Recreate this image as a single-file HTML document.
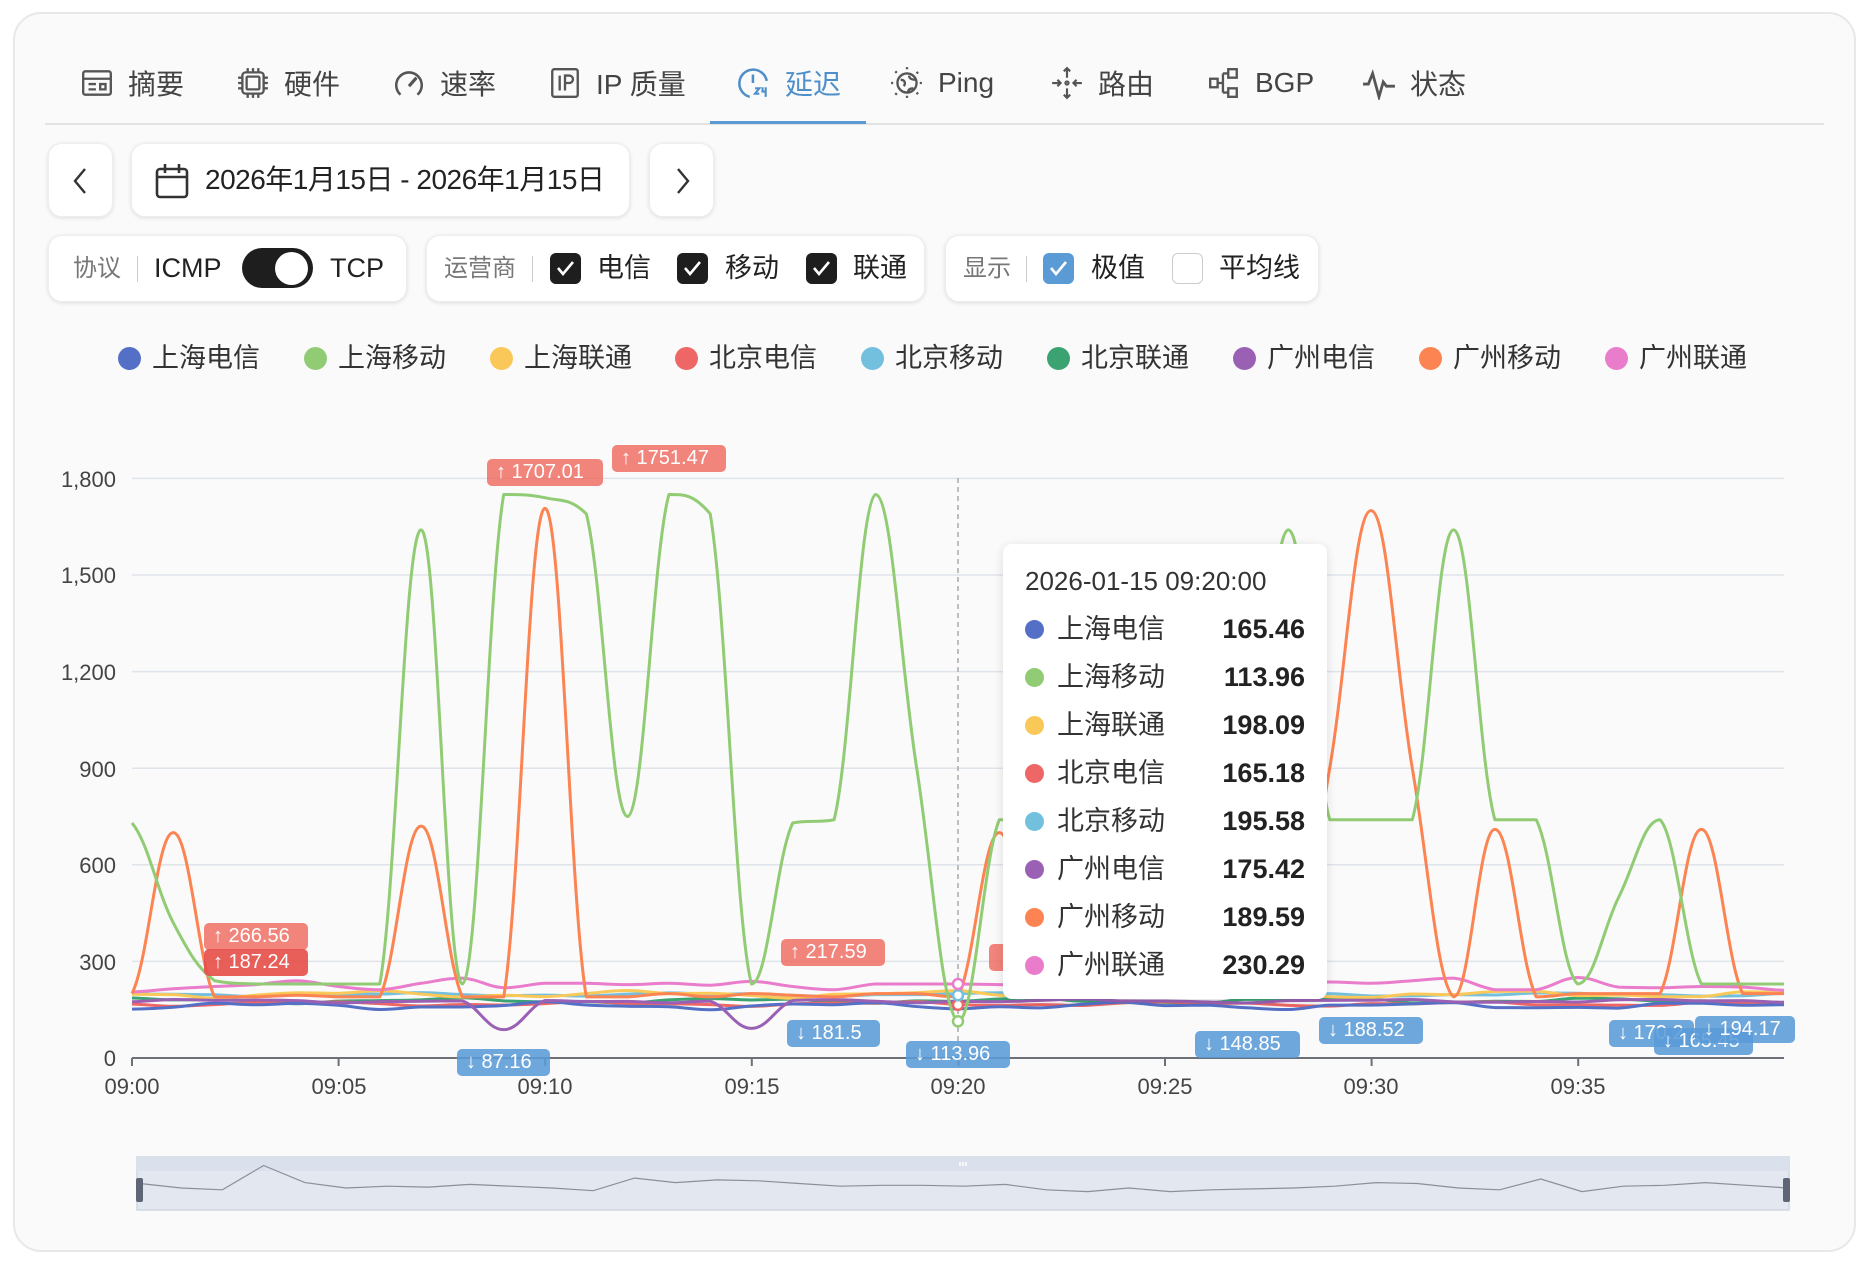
<!DOCTYPE html>
<html><head><meta charset="utf-8">
<style>
*{margin:0;padding:0;box-sizing:border-box}
body{width:1870px;height:1264px;background:#fff;position:relative;overflow:hidden;font-family:"Liberation Sans","Noto Sans CJK SC",sans-serif;color:#222}
.abs{position:absolute}
.card{left:13px;top:12px;width:1843px;height:1240px;background:#fafafa;border:2px solid #e8e8e8;border-radius:28px}
.tab{position:absolute;top:64px;height:38px;display:flex;align-items:center;font-size:28px;color:#444;white-space:nowrap}
.tab svg{width:34px;height:34px;margin-right:14px}
.btn{position:absolute;background:#fff;border-radius:14px;box-shadow:0 1px 4px rgba(0,0,0,.12);border:1px solid #eee}
.box{position:absolute;top:235px;height:67px;background:#fff;border-radius:14px;box-shadow:0 1px 4px rgba(0,0,0,.12);border:1px solid #eee}
.t{position:absolute;white-space:nowrap;line-height:1}
.lbl{font-size:24px;color:#777}
.big{font-size:27px;color:#222}
.sep{position:absolute;width:1px;height:26px;background:#ccc}
.cb{position:absolute;width:31px;height:31px;border-radius:6px;background:#1e1e1e}
.leg{position:absolute;top:344px;font-size:27px;color:#333;white-space:nowrap;line-height:28px}
.leg i{position:absolute;left:-34px;top:3px;width:23px;height:23px;border-radius:50%}
.ya{position:absolute;right:1754px;font-size:22px;color:#444;text-align:right}
.xa{position:absolute;top:1074px;font-size:22px;color:#444;transform:translateX(-50%)}
.bd{position:absolute;height:27px;border-radius:5px;color:#fff;font-size:20px;line-height:27px;padding-left:9px;white-space:nowrap;overflow:hidden}
.r{background:rgba(238,110,100,.85)}
.b{background:rgba(90,155,215,.88)}
.tip{left:1003px;top:544px;width:324px;height:455px;background:#fff;border-radius:9px;box-shadow:0 2px 10px rgba(0,0,0,.12)}
.row{position:absolute;left:0;width:324px;height:34px;font-size:27px;line-height:34px}
.row i{position:absolute;left:22px;top:8px;width:19px;height:19px;border-radius:50%}
.row span{position:absolute;left:54px;top:0;color:#333;line-height:34px}
.row b{position:absolute;right:22px;top:0;font-weight:bold;color:#222;line-height:34px}
</style></head><body>
<div class="abs card"></div>

<div class="tab" style="left:80px"><svg viewBox="0 0 32 32" fill="none" stroke="#555" stroke-width="2.2"><rect x="3" y="5" width="26" height="22" rx="2"/><path d="M3 12h26M8 17h7M8 22h7M19 17h5v5h-5z"/></svg>摘要</div>
<div class="tab" style="left:236px"><svg viewBox="0 0 32 32" fill="none" stroke="#555" stroke-width="2.2"><rect x="6" y="6" width="20" height="20" rx="3"/><rect x="10" y="10" width="12" height="12" rx="1"/><path d="M11 2v4M16 2v4M21 2v4M11 26v4M16 26v4M21 26v4M2 11h4M2 16h4M2 21h4M26 11h4M26 16h4M26 21h4"/></svg>硬件</div>
<div class="tab" style="left:392px"><svg viewBox="0 0 32 32" fill="none" stroke="#555" stroke-width="2.4"><path d="M8 27A12 12 0 1 1 24 27"/><path d="M16 19l7-8" stroke-width="3"/></svg>速率</div>
<div class="tab" style="left:548px"><svg viewBox="0 0 32 32" fill="none" stroke="#555" stroke-width="2.2"><rect x="4" y="3" width="24" height="26" rx="2"/><path d="M11 9v14M16 23V9h4a3 3 0 0 1 0 7h-4"/></svg>IP 质量</div>
<div class="tab" style="left:737px;color:#4f8fc9"><svg viewBox="0 0 32 32" fill="none" stroke="#4f8fc9" stroke-width="2.4"><path d="M12 29A13 13 0 1 1 28 14"/><path d="M15 8v8"/><path d="M17 21h4l-4 5h4M24 20v4h4M27 20v9" stroke-width="2"/></svg>延迟</div>
<div class="tab" style="left:890px"><svg viewBox="0 0 32 32" fill="none" stroke="#555" stroke-width="2.2"><circle cx="16" cy="16" r="9"/><path d="M10 13c4 0 5 3 3 6M18 9c0 3 3 4 6 4M17 25c0-3 2-4 5-4" /><path d="M16 1v3M16 28v3M1 16h3M28 16h3M5 5l2 2M25 25l2 2M5 27l2-2M25 7l2-2" stroke-dasharray="2 2"/></svg>Ping</div>
<div class="tab" style="left:1050px"><svg viewBox="0 0 32 32" fill="none" stroke="#555" stroke-width="2"><path d="M16 2v9M13 5l3-3 3 3M16 21v9M13 27l3 3 3-3M2 16h8M7 13l3 3-3 3M30 16h-8M25 13l-3 3 3 3"/><circle cx="16" cy="16" r="1.5"/></svg>路由</div>
<div class="tab" style="left:1207px"><svg viewBox="0 0 32 32" fill="none" stroke="#555" stroke-width="2.2"><rect x="3" y="12" width="7" height="8"/><rect x="20" y="3" width="8" height="8"/><rect x="20" y="21" width="8" height="8"/><path d="M10 16h5M15 7v18M15 7h5M15 25h5"/></svg>BGP</div>
<div class="tab" style="left:1362px"><svg viewBox="0 0 32 32" fill="none" stroke="#555" stroke-width="2.6"><path d="M1 17h5l4-10 6 22 4-14 3 4h8"/></svg>状态</div>
<div class="abs" style="left:45px;top:123px;width:1779px;height:2px;background:#e3e3e3"></div>
<div class="abs" style="left:710px;top:121px;width:156px;height:3px;background:#5b9bd5"></div>

<div class="btn" style="left:48px;top:143px;width:65px;height:74px"><svg class="abs" style="left:20px;top:22px" width="22" height="30" viewBox="0 0 22 30" fill="none" stroke="#333" stroke-width="2.4"><path d="M16 3L6 15l10 12"/></svg></div>
<div class="btn" style="left:131px;top:143px;width:499px;height:74px">
<svg class="abs" style="left:23px;top:19px" width="34" height="36" viewBox="0 0 34 36" fill="none" stroke="#333" stroke-width="2.6"><rect x="2" y="6" width="30" height="28" rx="3"/><path d="M2 14h30M10 1v9M24 1v9"/></svg>
<div class="t" style="left:73px;top:22px;font-size:28px;color:#222;letter-spacing:-0.5px">2026年1月15日 - 2026年1月15日</div></div>
<div class="btn" style="left:649px;top:143px;width:65px;height:74px"><svg class="abs" style="left:22px;top:22px" width="22" height="30" viewBox="0 0 22 30" fill="none" stroke="#333" stroke-width="2.4"><path d="M6 3l10 12L6 27"/></svg></div>

<div class="box" style="left:48px;width:359px">
<div class="t lbl" style="left:24px;top:21px">协议</div><div class="sep" style="left:88px;top:20px"></div>
<div class="t big" style="left:105px;top:19px">ICMP</div>
<div class="abs" style="left:193px;top:12px;width:71px;height:40px;border-radius:20px;background:#1e1e1e"></div>
<div class="abs" style="left:226px;top:16px;width:33px;height:33px;border-radius:50%;background:#fff"></div>
<div class="t big" style="left:281px;top:19px">TCP</div></div>
<div class="box" style="left:426px;width:499px">
<div class="t lbl" style="left:17px;top:21px">运营商</div><div class="sep" style="left:105px;top:20px"></div>
<div class="cb" style="left:123px;top:17px"></div><svg class="abs" style="left:123px;top:17px" width="31" height="31" viewBox="0 0 31 31" fill="none" stroke="#fff" stroke-width="2.6"><path d="M8 15l5 6 10-12"/></svg>
<div class="t big" style="left:170px;top:19px">电信</div>
<div class="cb" style="left:250px;top:17px"></div><svg class="abs" style="left:250px;top:17px" width="31" height="31" viewBox="0 0 31 31" fill="none" stroke="#fff" stroke-width="2.6"><path d="M8 15l5 6 10-12"/></svg>
<div class="t big" style="left:298px;top:19px">移动</div>
<div class="cb" style="left:379px;top:17px"></div><svg class="abs" style="left:379px;top:17px" width="31" height="31" viewBox="0 0 31 31" fill="none" stroke="#fff" stroke-width="2.6"><path d="M8 15l5 6 10-12"/></svg>
<div class="t big" style="left:426px;top:19px">联通</div></div>
<div class="box" style="left:945px;width:374px">
<div class="t lbl" style="left:17px;top:21px">显示</div><div class="sep" style="left:80px;top:20px"></div>
<div class="cb" style="left:97px;top:17px;background:#5b9bd5"></div><svg class="abs" style="left:97px;top:17px" width="31" height="31" viewBox="0 0 31 31" fill="none" stroke="#fff" stroke-width="2.6"><path d="M8 15l5 6 10-12"/></svg>
<div class="t big" style="left:145px;top:19px">极值</div>
<div class="cb" style="left:226px;top:17px;background:#fff;border:1.5px solid #ccc"></div>
<div class="t big" style="left:273px;top:19px">平均线</div></div>

<div class="leg" style="left:152px"><i style="background:#5470c6"></i>上海电信</div>
<div class="leg" style="left:338px"><i style="background:#91cc75"></i>上海移动</div>
<div class="leg" style="left:524px"><i style="background:#fac858"></i>上海联通</div>
<div class="leg" style="left:709px"><i style="background:#ee6666"></i>北京电信</div>
<div class="leg" style="left:895px"><i style="background:#73c0de"></i>北京移动</div>
<div class="leg" style="left:1081px"><i style="background:#3ba272"></i>北京联通</div>
<div class="leg" style="left:1267px"><i style="background:#9a60b4"></i>广州电信</div>
<div class="leg" style="left:1453px"><i style="background:#fc8452"></i>广州移动</div>
<div class="leg" style="left:1639px"><i style="background:#ea7ccc"></i>广州联通</div>

<div class="ya" style="top:467px">1,800</div>
<div class="ya" style="top:563px">1,500</div>
<div class="ya" style="top:660px">1,200</div>
<div class="ya" style="top:757px">900</div>
<div class="ya" style="top:853px">600</div>
<div class="ya" style="top:950px">300</div>
<div class="ya" style="top:1046px">0</div>
<div class="xa" style="left:132px">09:00</div>
<div class="xa" style="left:339px">09:05</div>
<div class="xa" style="left:545px">09:10</div>
<div class="xa" style="left:752px">09:15</div>
<div class="xa" style="left:958px">09:20</div>
<div class="xa" style="left:1165px">09:25</div>
<div class="xa" style="left:1371px">09:30</div>
<div class="xa" style="left:1578px">09:35</div>

<svg id="ch" class="abs" style="left:0;top:0" width="1870" height="1264"></svg>

<div class="bd r" style="left:204px;top:923px;width:104px">↑ 266.56</div>
<div class="bd r" style="left:204px;top:949px;width:104px;background:rgba(230,80,75,.92)">↑ 187.24</div>
<div class="bd r" style="left:487px;top:459px;width:116px">↑ 1707.01</div>
<div class="bd r" style="left:612px;top:445px;width:114px">↑ 1751.47</div>
<div class="bd r" style="left:781px;top:939px;width:104px">↑ 217.59</div>
<div class="bd r" style="left:989px;top:944px;width:30px"></div>
<div class="bd b" style="left:457px;top:1049px;width:93px">↓ 87.16</div>
<div class="bd b" style="left:787px;top:1020px;width:93px">↓ 181.5</div>
<div class="bd b" style="left:906px;top:1041px;width:104px">↓ 113.96</div>
<div class="bd b" style="left:1195px;top:1031px;width:105px">↓ 148.85</div>
<div class="bd b" style="left:1319px;top:1017px;width:104px">↓ 188.52</div>
<div class="bd b" style="left:1609px;top:1020px;width:85px">↓ 170.2</div>
<div class="bd b" style="left:1654px;top:1028px;width:99px">↓ 165.45</div>
<div class="bd b" style="left:1695px;top:1016px;width:100px">↓ 194.17</div>

<div class="abs tip">
<div class="t" style="left:22px;top:24px;font-size:26px;color:#333">2026-01-15 09:20:00</div>
<div class="row" style="top:68px"><i style="background:#5470c6"></i><span>上海电信</span><b>165.46</b></div>
<div class="row" style="top:116px"><i style="background:#91cc75"></i><span>上海移动</span><b>113.96</b></div>
<div class="row" style="top:164px"><i style="background:#fac858"></i><span>上海联通</span><b>198.09</b></div>
<div class="row" style="top:212px"><i style="background:#ee6666"></i><span>北京电信</span><b>165.18</b></div>
<div class="row" style="top:260px"><i style="background:#73c0de"></i><span>北京移动</span><b>195.58</b></div>
<div class="row" style="top:308px"><i style="background:#9a60b4"></i><span>广州电信</span><b>175.42</b></div>
<div class="row" style="top:356px"><i style="background:#fc8452"></i><span>广州移动</span><b>189.59</b></div>
<div class="row" style="top:404px"><i style="background:#ea7ccc"></i><span>广州联通</span><b>230.29</b></div>
</div>

<script>
(function(){
var NS="http://www.w3.org/2000/svg",svg=document.getElementById('ch');
function el(n,a){var e=document.createElementNS(NS,n);for(var k in a)e.setAttribute(k,a[k]);return e;}
var X=function(m){return 132+m*41.3;},Y=function(v){return 1058-v*0.322;};
var g=el('g',{});svg.appendChild(g);
[1800,1500,1200,900,600,300].forEach(function(v){g.appendChild(el('line',{x1:132,x2:1784,y1:Y(v),y2:Y(v),stroke:'#dfe3ea','stroke-width':1.5}));});
g.appendChild(el('line',{x1:132,x2:1784,y1:1058,y2:1058,stroke:'#6e7079','stroke-width':2}));
for(var i=0;i<8;i++){var x=132+i*206.6;g.appendChild(el('line',{x1:x,x2:x,y1:1058,y2:1066,stroke:'#6e7079','stroke-width':2}));}
function path(vals){
 var p=vals.map(function(v,i){return [X(i),Y(v)];});
 var d='M'+p[0][0]+' '+p[0][1],t=0.2;
 for(var i=0;i<p.length-1;i++){
  var p0=p[i-1]||p[i],p1=p[i],p2=p[i+1],p3=p[i+2]||p2;
  var c1y=p1[1]+(p2[1]-p0[1])*t,c2y=p2[1]-(p3[1]-p1[1])*t;
  var lo=Math.min(p1[1],p2[1]),hi=Math.max(p1[1],p2[1]);
  c1y=Math.max(lo,Math.min(hi,c1y));c2y=Math.max(lo,Math.min(hi,c2y));
  d+=' C'+(p1[0]+(p2[0]-p1[0])*0.4)+' '+c1y+' '+(p2[0]-(p2[0]-p1[0])*0.4)+' '+c2y+' '+p2[0]+' '+p2[1];
 }
 return d;
}
function flat(base,amp,seed){var a=[];for(var i=0;i<=40;i++){a.push(base+amp*Math.sin(i*0.9+seed)+amp*0.6*Math.sin(i*2.3+seed*2));}return a;}
var S=[];
S.push(['#3ba272',flat(178,6,1)]);
S.push(['#73c0de',flat(197,4,2)]);
S.push(['#fac858',flat(198,8,3)]);
S.push(['#ee6666',flat(168,5,4)]);
S.push(['#5470c6',flat(162,8,5)]);
var pu=flat(177,4,6);pu[9]=88;pu[15]=92;S.push(['#9a60b4',pu]);
var pk=[205,215,222,228,240,222,212,232,248,218,232,232,228,232,226,238,222,212,230,230,230,228,226,232,236,228,226,230,232,236,232,240,248,212,212,250,220,218,222,220,210];
S.push(['#ea7ccc',pk]);
var G=[730,420,240,230,230,230,230,1640,230,1750,1740,1690,750,1750,1690,230,730,740,1750,900,114,740,740,740,740,740,740,740,1640,740,740,740,1640,740,740,230,500,740,230,230,230];
var O=[200,700,190,190,195,190,190,720,190,190,1707,190,190,200,190,200,195,190,200,200,190,700,200,200,200,200,200,200,200,900,1700,900,190,710,190,200,200,200,710,200,200];
S.push(['#fc8452',O]);S.push(['#91cc75',G]);
S.forEach(function(s){g.appendChild(el('path',{d:path(s[1]),fill:'none',stroke:s[0],'stroke-width':3,'stroke-linejoin':'round'}));});
g.appendChild(el('line',{x1:958,x2:958,y1:478,y2:1058,stroke:'#aaa','stroke-width':1.5,'stroke-dasharray':'5 4'}));
[[113.96,'#91cc75'],[165,'#ee6666'],[195,'#73c0de'],[230,'#ea7ccc']].forEach(function(c){g.appendChild(el('circle',{cx:958,cy:Y(c[0]),r:5,fill:'#fff',stroke:c[1],'stroke-width':2.5}));});
g.appendChild(el('rect',{x:137,y:1157,width:1652,height:53,fill:'#e3e7ef',stroke:'#cfd6e2','stroke-width':1.5}));
g.appendChild(el('rect',{x:137,y:1157,width:1652,height:14,fill:'#dbe1ec'}));
var mp='';for(var i=0;i<=40;i++){var v=[195,190,188,215,196,190,192,191,194,192,190,187,201,196,199,198,195,192,193,193,192,194,188,186,190,186,188,189,190,192,196,195,190,188,200,186,192,193,196,193,190][i];mp+=(i?'L':'M')+(140+i*41.2)+' '+(1188+(190-v)*0.9);}
g.appendChild(el('path',{d:mp,fill:'none',stroke:'#8a8f99','stroke-width':1.2}));
g.appendChild(el('rect',{x:136,y:1178,width:7,height:24,rx:2,fill:'#5e6675'}));
g.appendChild(el('rect',{x:1783,y:1178,width:7,height:24,rx:2,fill:'#5e6675'}));
g.appendChild(el('path',{d:'M960 1162v4M963 1162v4M966 1162v4',stroke:'#fff','stroke-width':1.5}));
})();
</script>
</body></html>
